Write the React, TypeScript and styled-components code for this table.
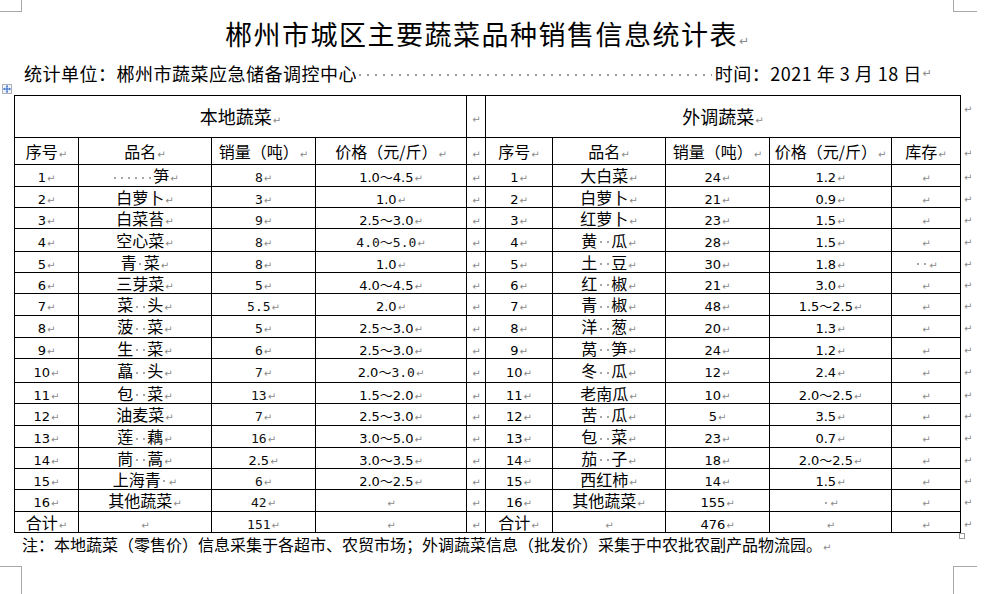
import React from 'react'
import styled, { createGlobalStyle } from 'styled-components'

// ------------------------------------------------ types
type Node = React.ReactNode

interface ILine {
  h: number
  no: Node
  name: Node
  qty: Node
  price: Node
  rno: Node
  rname: Node
  rqty: Node
  rprice: Node
  stock?: Node
}

// ------------------------------------------------ style
const GlobalStyle = createGlobalStyle`
  html, body {
    margin: 0;
    padding: 0;
    background: #fff;
  }
  body {
    font-family: 'Noto Sans CJK SC', 'DejaVu Sans', sans-serif;
    color: #000;
  }
`

const Page = styled.div`
  position: relative;
  width: 993px;
  height: 594px;
  overflow: hidden;
  background: #fff;
`

const CornerMark = styled.div<{ $x: 'left' | 'right'; $y: 'top' | 'bottom' }>`
  position: absolute;
  box-sizing: border-box;
  width: ${(p) => (p.$x === 'left' ? 22 : 24)}px;
  height: ${(p) => (p.$y === 'top' ? 12 : 28)}px;
  left: ${(p) => (p.$x === 'left' ? 0 : 953)}px;
  top: ${(p) => (p.$y === 'top' ? 0 : 566)}px;
  border-color: #a8a8a8;
  border-style: solid;
  border-width: 0;
  ${(p) => (p.$x === 'left' ? 'border-right-width: 1px;' : 'border-left-width: 1px;')}
  ${(p) => (p.$y === 'top' ? 'border-bottom-width: 1px;' : 'border-top-width: 1px;')}
`

const Doc = styled.div`
  padding-left: 14px;
  padding-top: 16px;
`

const Title = styled.div`
  height: 36px;
  width: 946px;
  text-align: center;
  font-size: 27px;
  letter-spacing: 1.5px;
  line-height: 36px;
`

const Subline = styled.div`
  display: flex;
  align-items: center;
  box-sizing: content-box;
  width: 908px;
  height: 22px;
  margin-top: 10px;
  padding-left: 10px;
  font-size: 18px;
  letter-spacing: 0.5px;
  line-height: 22px;
  white-space: nowrap;
`

const Leader = styled.span`
  flex: 1;
  align-self: stretch;
  margin: 0 3px 0 2px;
  background-image: linear-gradient(90deg, #9c9c9c 2px, transparent 2px);
  background-size: 8px 2px;
  background-repeat: repeat-x;
  background-position: 0 60%;
`

const TableWrap = styled.div`
  position: relative;
  width: 972px;
  margin-top: 11px;
`

const MoveHandle = styled.div`
  position: absolute;
  left: -12px;
  top: -11px;
  box-sizing: border-box;
  width: 10px;
  height: 10px;
  border: 1px solid #aab0b8;
  background: #f4f6fa;
  display: flex;
  align-items: center;
  justify-content: center;
`

const ResizeHandle = styled.div`
  position: absolute;
  left: 945px;
  bottom: -6px;
  box-sizing: border-box;
  width: 6px;
  height: 6px;
  border: 1px solid #9a9a9a;
  background: #fff;
`

const Sheet = styled.table`
  border-collapse: collapse;
  table-layout: fixed;
  width: 972px;
`

const Col = styled.col<{ $w: number }>`
  width: ${(p) => p.$w}px;
`

const Row = styled.tr<{ $h: number }>`
  height: ${(p) => p.$h}px;
`

const Cell = styled.td<{ $big?: boolean }>`
  border: 1px solid #000;
  padding: 0;
  text-align: center;
  vertical-align: middle;
  font-size: ${(p) => (p.$big ? 18 : 16)}px;
  line-height: 16px;
  white-space: nowrap;
`

const EdgeCell = styled.td<{ $top?: boolean }>`
  border: none;
  padding: ${(p) => (p.$top ? '4px' : '0')} 0 0 2px;
  text-align: left;
  vertical-align: ${(p) => (p.$top ? 'top' : 'middle')};
  line-height: 12px;
`

const Num = styled.span`
  font-family: 'DejaVu Sans', 'Noto Sans CJK SC', sans-serif;
  font-size: 13px;
  line-height: 1;
`

const Thin = styled.span`
  font-family: 'DejaVu Sans Mono', 'Noto Sans CJK SC', monospace;
  font-size: 13px;
  line-height: 1;
  color: #111;
`

const RetMark = styled.span<{ $size?: number }>`
  font-family: 'DejaVu Sans', sans-serif;
  font-size: ${(p) => p.$size ?? 10}px;
  line-height: 1;
  color: #8a8a8a;
  margin-left: 1px;
  letter-spacing: 0;
`

const Sp = styled.span`
  display: inline-block;
  width: 7px;
  height: 8px;
  vertical-align: middle;
  background: linear-gradient(#a6a6a6, #a6a6a6) center / 2px 2px no-repeat;
`

const Note = styled.div`
  padding-left: 8px;
  font-size: 16px;
  line-height: 22px;
  white-space: nowrap;
`

// ------------------------------------------------ parts
const Ret = ({ size }: { size?: number }) => <RetMark $size={size}>↵</RetMark>

const Dots = ({ n }: { n: number }) => (
  <>
    {Array.from({ length: n }, (_, i) => (
      <Sp key={i} />
    ))}
  </>
)

const pair = (a: string, b: string) => (
  <>
    {a}
    <Dots n={2} />
    {b}
  </>
)

const show = (v: Node) => (typeof v === 'string' && /^[\d.～]+$/.test(v) ? <Num>{v}</Num> : v)

const MoveIcon = () => (
  <svg width="8" height="8" viewBox="0 0 8 8">
    <path d="M4 1v6M1 4h6" stroke="#2a62c9" strokeWidth="1" />
    <path d="M4 0L2.6 1.6h2.8zM4 8L2.6 6.4h2.8zM0 4L1.6 2.6v2.8zM8 4L6.4 2.6v2.8z" fill="#2a62c9" />
  </svg>
)

// ------------------------------------------------ data
const widths = [64, 133, 104, 151, 19, 67, 113, 104, 122, 69, 26]

const lines: ILine[] = [
  { h: 22, no: '1', name: <><Dots n={6} />笋</>, qty: <Thin>8</Thin>, price: '1.0～4.5', rno: '1', rname: '大白菜', rqty: '24', rprice: '1.2' },
  { h: 21, no: '2', name: '白萝卜', qty: <Thin>3</Thin>, price: '1.0', rno: '2', rname: '白萝卜', rqty: '21', rprice: '0.9' },
  { h: 21, no: '3', name: '白菜苔', qty: <Thin>9</Thin>, price: '2.5～3.0', rno: '3', rname: '红萝卜', rqty: '23', rprice: '1.5' },
  { h: 23, no: '4', name: '空心菜', qty: <Thin>8</Thin>, price: <Thin>4.0～5.0</Thin>, rno: '4', rname: pair('黄', '瓜'), rqty: '28', rprice: '1.5' },
  { h: 21, no: '5', name: <>青<Sp />菜</>, qty: <Thin>8</Thin>, price: '1.0', rno: '5', rname: pair('土', '豆'), rqty: '30', rprice: '1.8', stock: <Dots n={2} /> },
  { h: 21, no: '6', name: '三芽菜', qty: <Thin>5</Thin>, price: '4.0～4.5', rno: '6', rname: pair('红', '椒'), rqty: '21', rprice: '3.0' },
  { h: 22, no: '7', name: pair('菜', '头'), qty: <Thin>5.5</Thin>, price: '2.0', rno: '7', rname: pair('青', '椒'), rqty: '48', rprice: '1.5～2.5' },
  { h: 22, no: '8', name: pair('菠', '菜'), qty: <Thin>5</Thin>, price: '2.5～3.0', rno: '8', rname: pair('洋', '葱'), rqty: '20', rprice: '1.3' },
  { h: 21, no: '9', name: pair('生', '菜'), qty: <Thin>6</Thin>, price: '2.5～3.0', rno: '9', rname: pair('莴', '笋'), rqty: '24', rprice: '1.2' },
  { h: 24, no: '10', name: pair('藠', '头'), qty: <Thin>7</Thin>, price: <><Num>2.0～</Num><Thin>3.0</Thin></>, rno: '10', rname: pair('冬', '瓜'), rqty: '12', rprice: '2.4' },
  { h: 21, no: '11', name: pair('包', '菜'), qty: <Thin>13</Thin>, price: '1.5～2.0', rno: '11', rname: '老南瓜', rqty: '10', rprice: '2.0～2.5' },
  { h: 22, no: '12', name: '油麦菜', qty: <Thin>7</Thin>, price: '2.5～3.0', rno: '12', rname: pair('苦', '瓜'), rqty: '5', rprice: '3.5' },
  { h: 22, no: '13', name: pair('莲', '藕'), qty: <Thin>16</Thin>, price: '3.0～5.0', rno: '13', rname: pair('包', '菜'), rqty: '23', rprice: '0.7' },
  { h: 21, no: '14', name: pair('茼', '蒿'), qty: '2.5', price: '3.0～3.5', rno: '14', rname: pair('茄', '子'), rqty: '18', rprice: '2.0～2.5' },
  { h: 21, no: '15', name: <>上海青<Sp /></>, qty: <Thin>6</Thin>, price: '2.0～2.5', rno: '15', rname: '西红柿', rqty: '14', rprice: '1.5' },
  { h: 22, no: '16', name: '其他蔬菜', qty: <Thin>42</Thin>, price: null, rno: '16', rname: '其他蔬菜', rqty: '155', rprice: <Sp /> },
  { h: 21, no: '合计', name: null, qty: <Thin>151</Thin>, price: null, rno: '合计', rname: null, rqty: '476', rprice: null }
]

const heads = ['序号', '品名', '销量（吨）', '价格（元/斤）']
const rheads = ['序号', '品名', '销量（吨）', '价格（元/斤）', '库存']

// ------------------------------------------------ comp
export default function App() {
  return (
    <Page>
      <GlobalStyle />
      <CornerMark $x="left" $y="top" />
      <CornerMark $x="right" $y="top" />
      <CornerMark $x="left" $y="bottom" />
      <CornerMark $x="right" $y="bottom" />
      <Doc>
        <Title>
          郴州市城区主要蔬菜品种销售信息统计表
          <Ret size={12} />
        </Title>
        <Subline>
          <span>统计单位：郴州市蔬菜应急储备调控中心</span>
          <Leader />
          <span>时间：2021 年 3 月 18 日</span>
          <Ret size={11} />
        </Subline>
        <TableWrap>
          <MoveHandle>
            <MoveIcon />
          </MoveHandle>
          <Sheet>
            <colgroup>
              {widths.map((w, i) => (
                <Col key={i} $w={w} />
              ))}
            </colgroup>
            <tbody>
              <Row $h={42}>
                <Cell colSpan={4} $big>
                  本地蔬菜
                  <Ret />
                </Cell>
                <Cell>
                  <Ret />
                </Cell>
                <Cell colSpan={5} $big>
                  外调蔬菜
                  <Ret />
                </Cell>
                <EdgeCell $top>
                  <Ret />
                </EdgeCell>
              </Row>
              <Row $h={27}>
                {heads.map((t) => (
                  <Cell key={t}>
                    {t}
                    <Ret />
                  </Cell>
                ))}
                <Cell>
                  <Ret />
                </Cell>
                {rheads.map((t) => (
                  <Cell key={'r' + t}>
                    {t}
                    <Ret />
                  </Cell>
                ))}
                <EdgeCell>
                  <Ret />
                </EdgeCell>
              </Row>
              {lines.map((r, i) => (
                <Row key={i} $h={r.h}>
                  {[r.no, r.name, r.qty, r.price].map((v, j) => (
                    <Cell key={j}>
                      {show(v)}
                      <Ret />
                    </Cell>
                  ))}
                  <Cell>
                    <Ret />
                  </Cell>
                  {[r.rno, r.rname, r.rqty, r.rprice, r.stock].map((v, j) => (
                    <Cell key={'r' + j}>
                      {show(v ?? null)}
                      <Ret />
                    </Cell>
                  ))}
                  <EdgeCell>
                    <Ret />
                  </EdgeCell>
                </Row>
              ))}
            </tbody>
          </Sheet>
          <ResizeHandle />
        </TableWrap>
        <Note>
          注：本地蔬菜（零售价）信息采集于各超市、农贸市场；外调蔬菜信息（批发价）采集于中农批农副产品物流园。
          <Ret />
        </Note>
      </Doc>
    </Page>
  )
}
